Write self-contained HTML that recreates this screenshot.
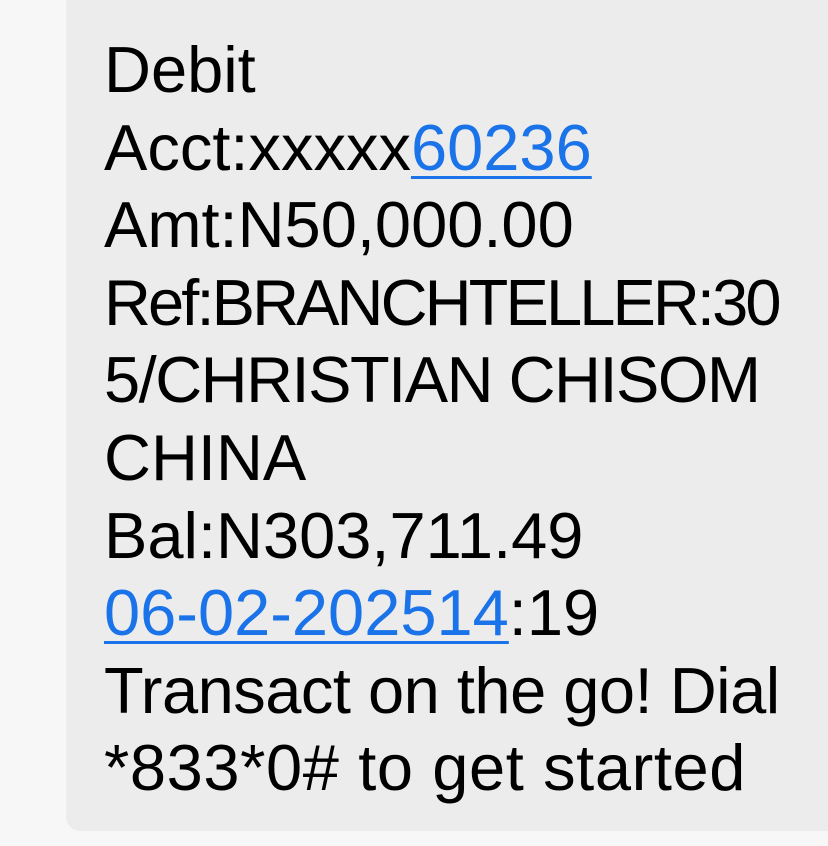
<!DOCTYPE html>
<html><head><style>
html,body{margin:0;padding:0;width:828px;height:846px;overflow:hidden;background:#f7f7f7;}
.b{position:absolute;left:66px;top:-20px;width:800px;height:851px;background:#ececec;border-radius:14px;}
.t{position:absolute;left:104px;top:31px;font-family:"Liberation Sans",Arial,sans-serif;font-size:65px;line-height:77.6px;color:#000;}
.t div{white-space:nowrap;}
a{color:#1a73e8;text-decoration:underline;text-decoration-thickness:3px;text-underline-offset:6px;}
</style></head><body>
<div class="b"></div>
<div class="t">
<div>Debit</div>
<div>Acct:xxxxx<a>60236</a></div>
<div>Amt:N50,000.00</div>
<div style="letter-spacing:-2.9px">Ref:BRANCHTELLER:30</div>
<div style="letter-spacing:-1.5px">5/CHRISTIAN CHISOM</div>
<div>CHINA</div>
<div>Bal:N303,711.49</div>
<div><a>06-02-202514</a>:19</div>
<div style="letter-spacing:-0.5px">Transact on the go! Dial</div>
<div style="letter-spacing:0.6px">*833*0# to get started</div>
</div>
</body></html>
